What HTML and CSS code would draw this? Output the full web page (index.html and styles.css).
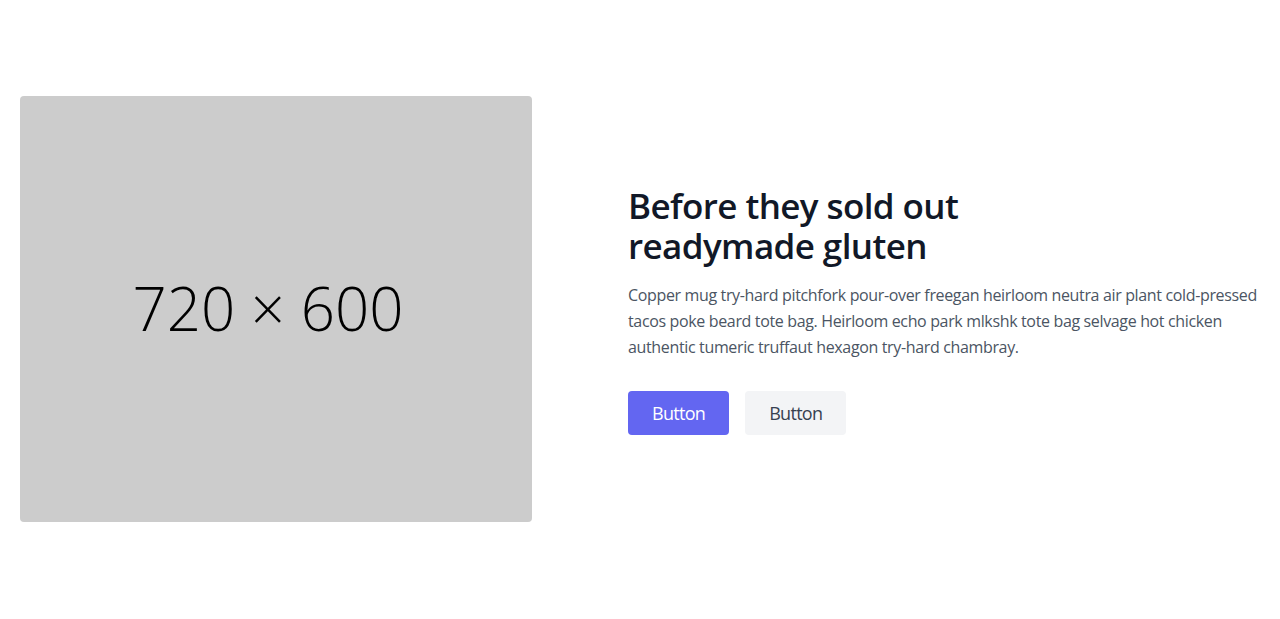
FILE: index.html
```html
<!DOCTYPE html>
<html lang="en">
<head>
<meta charset="utf-8">
<title>Hero</title>
<link rel="stylesheet" href="styles.css">
</head>
<body>
<section class="hero">
  <div class="container">
    <div class="media">
      <div class="placeholder"><span>720 × 600</span></div>
    </div>
    <div class="content">
      <h1 class="title">Before they sold out<br>readymade gluten</h1>
      <p class="lead">Copper mug try-hard pitchfork pour-over freegan heirloom neutra air plant cold-pressed tacos poke beard tote bag. Heirloom echo park mlkshk tote bag selvage hot chicken authentic tumeric truffaut hexagon try-hard chambray.</p>
      <div class="actions">
        <button class="btn btn-primary">Button</button>
        <button class="btn btn-secondary">Button</button>
      </div>
    </div>
  </div>
</section>
</body>
</html>
```

FILE: styles.css
```css
* { box-sizing: border-box; }
html, body { margin: 0; padding: 0; background: #ffffff; }
body {
  font-family: "Open Sans", "Noto Sans", sans-serif;
  color: #4b5563;
}
.container {
  max-width: 1280px;
  margin: 0 auto;
  padding: 96px 20px;
  display: flex;
  align-items: center;
}
.media {
  width: 512px;
  flex-shrink: 0;
}
.placeholder {
  width: 512px;
  height: 426px;
  background: #cccccc;
  border-radius: 4px;
  display: flex;
  align-items: center;
  justify-content: center;
  padding-right: 16px;
  padding-bottom: 2px;
  color: #000000;
  font-family: "Open Sans", sans-serif;
  font-weight: 300;
  font-size: 60px;
}
.content {
  flex-grow: 1;
  padding-left: 96px;
  display: flex;
  flex-direction: column;
  align-items: flex-start;
}
.title {
  margin: 2px 0 16px;
  font-size: 35px;
  line-height: 40px;
  font-weight: 600;
  letter-spacing: -0.6px;
  color: #111827;
}
.lead {
  margin: 0 0 31px;
  font-size: 16px;
  line-height: 26px;
  letter-spacing: -0.35px;
}
.actions { display: flex; }
.btn {
  font-family: inherit;
  border: 0;
  border-radius: 4px;
  padding: 8px 24px;
  font-size: 18px;
  line-height: 28px;
  letter-spacing: -0.7px;
  cursor: pointer;
}
.btn-primary { background: #6366f1; color: #ffffff; margin-right: 16px; }
.btn-secondary { background: #f3f4f6; color: #374151; }
```
